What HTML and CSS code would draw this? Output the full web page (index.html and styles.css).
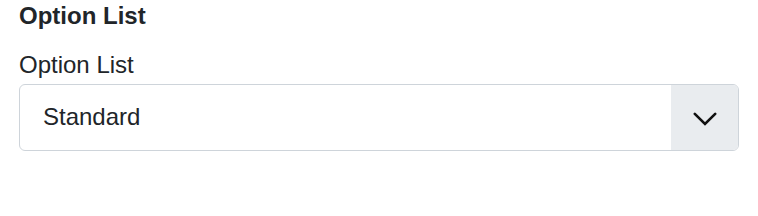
FILE: index.html
```html
<!DOCTYPE html>
<html lang="en">
<head>
  <meta charset="UTF-8" />
  <meta name="viewport" content="width=device-width, initial-scale=1.0"/>
  <title>Option List</title>
  <link rel="stylesheet" href="styles.css">
</head>
<body>

  <div class="field">
    <h3 class="field-title">Option List</h3>
    <label class="field-label" for="optionList">Option List</label>
    <div class="select-box">
      <div class="select-value" id="optionList">Standard</div>
      <div class="select-toggle">
        <svg width="24" height="14" viewBox="0 0 24 14">
          <polyline points="1.8,1.8 12,12 22.2,1.8" fill="none" stroke="#111" stroke-width="2.6" stroke-linecap="round" stroke-linejoin="miter"/>
        </svg>
      </div>
    </div>
  </div>

</body>
</html>
```

FILE: styles.css
```css
body {
  font-family: "Liberation Sans", Arial, sans-serif;
  background: #fff;
  color: #212529;
  margin: 0;
  padding: 2px 19px 0;
}

.field-title {
  font-size: 24px;
  font-weight: bold;
  line-height: 28px;
  margin: 0;
}

.field-label {
  display: block;
  font-size: 24px;
  line-height: 28px;
  margin-top: 21px;
}

.select-box {
  display: flex;
  margin-top: 5px;
  height: 67px;
  box-sizing: border-box;
  border: 1px solid #ced4da;
  border-radius: 6px;
  overflow: hidden;
}

.select-value {
  flex: 1;
  font-size: 24px;
  line-height: 36px;
  padding: 14px 23px;
}

.select-toggle {
  width: 67px;
  background: #e9ecef;
  display: flex;
  align-items: center;
  justify-content: center;
  padding-top: 3px;
  box-sizing: border-box;
}
```
